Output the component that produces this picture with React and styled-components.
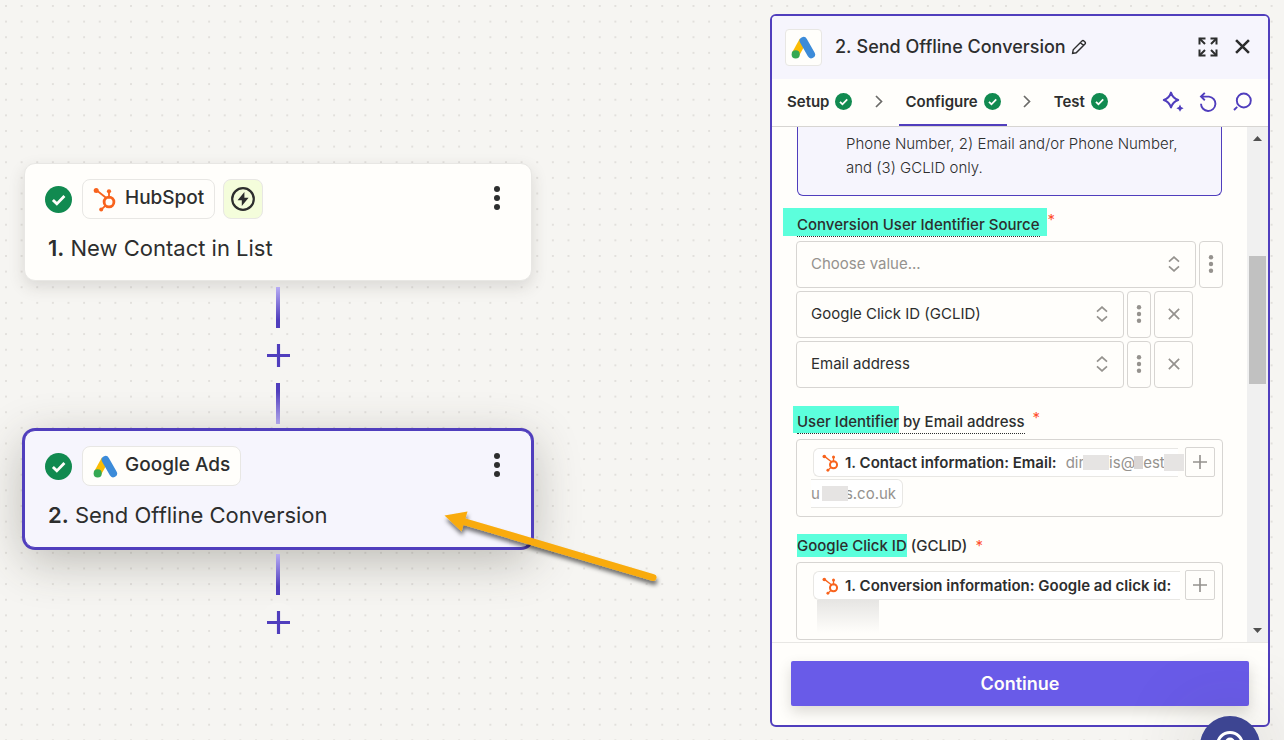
import React from 'react';
import styled, { createGlobalStyle, css } from 'styled-components';

const GlobalStyle = createGlobalStyle`
  * {
    box-sizing: border-box;
  }

  body {
    margin: 0;
    background-color: #f6f5f2;
    color: #2d2e2e;
    font-family: Inter, "Liberation Sans", sans-serif;
    overflow: hidden;
  }

  button,
  select {
    font-family: inherit;
    color: inherit;
    background: none;
    border: none;
    padding: 0;
    margin: 0;
  }

  button {
    cursor: pointer;
  }

  svg {
    display: block;
    flex-shrink: 0;
  }
`;

const Page = styled.div`
  position: relative;
  display: flex;
  align-items: stretch;
  height: 100vh;
  overflow: hidden;
`;

const DotGrid = styled.svg`
  position: absolute;
  inset: 0;
  width: 100%;
  height: 100%;
`;

/* ---------- canvas ---------- */

const Canvas = styled.main`
  position: relative;
  flex: 1;
  min-width: 0;
  display: flex;
  flex-direction: column;
  align-items: flex-start;
  padding: 163px 24px 0;
`;

const Flow = styled.div`
  width: 100%;
  max-width: 508px;
  display: flex;
  flex-direction: column;
  align-items: center;
`;

const StepCard = styled.section`
  width: 100%;
  height: 118px;
  padding: 15px 20px 0;
  border: 1px solid #e8e7e4;
  border-radius: 11px;
  background-color: #fffefb;
  box-shadow: 0 6px 16px rgba(60, 55, 45, 0.15);

  ${({ $selected }) =>
    $selected &&
    css`
      border-color: #503ebd;
      background-color: #f6f5fd;
      box-shadow: 0 0 0 2px #503ebd, 0 12px 48px rgba(60, 55, 45, 0.32);
    `}
`;

const StepHeader = styled.div`
  display: flex;
  align-items: center;
  gap: 8px;
`;

const StepStatus = styled.span`
  display: flex;
  margin-right: 2px;
`;

const AppChip = styled.button`
  display: flex;
  align-items: center;
  gap: 7px;
  height: 40px;
  padding: 0 10px;
  border: 1px solid #e8e7e4;
  border-radius: 8px;
  background-color: #fffefb;
  font-size: 19px;
  font-weight: 500;
  line-height: 24px;
`;

const AppName = styled.span`
  padding-bottom: 2px;
`;

const TriggerChip = styled.span`
  display: flex;
  align-items: center;
  justify-content: center;
  width: 40px;
  height: 40px;
  border: 1px solid #e8e7e4;
  border-radius: 8px;
  background-color: #f4fddb;
`;

const StepMenu = styled.button`
  display: flex;
  justify-content: center;
  width: 24px;
  margin-left: auto;
  margin-right: 2px;
  padding-bottom: 2px;
`;

const StepTitle = styled.h2`
  margin: 14px 0 0 3px;
  font-size: 22px;
  font-weight: 400;
  line-height: 30px;

  b {
    font-weight: 600;
  }
`;

const Connector = styled.div`
  display: flex;
  flex-direction: column;
  align-items: center;
  padding: 6px 0;
`;

const Line = styled.div`
  width: 4px;
  height: 41px;
  background: linear-gradient(
    ${({ $up }) => ($up ? 'to top' : 'to bottom')},
    #b7acf5,
    #503ebd 80%
  );
`;

const AddStep = styled.button`
  display: flex;
  align-items: center;
  justify-content: center;
  width: 39px;
  height: 39px;
  margin: 8px 0;
  border-radius: 50%;
  background-color: #f6f5f2;
  color: #503ebd;
`;

const Arrow = styled.svg`
  position: absolute;
  left: 436px;
  top: 500px;
  pointer-events: none;
  overflow: visible;
`;

/* ---------- side panel ---------- */

const Panel = styled.aside`
  position: relative;
  flex: 0 0 500px;
  display: flex;
  flex-direction: column;
  margin: 14px 14px 13px 0;
  border: 2px solid #503ebd;
  border-radius: 6px;
  background-color: #fffefb;
  overflow: hidden;
`;

const PanelHeader = styled.header`
  display: flex;
  align-items: center;
  flex: 0 0 63px;
  padding: 0 18px 0 13px;
  background-color: #f6f5fd;
`;

const AppTile = styled.div`
  display: flex;
  align-items: center;
  justify-content: center;
  width: 37px;
  height: 37px;
  margin-right: 13px;
  border: 1px solid #e8e7e4;
  border-radius: 4px;
  background-color: #fffefb;
`;

const PanelTitle = styled.h1`
  display: flex;
  gap: 5px;
  margin: 0 5px 0 0;
  padding-bottom: 2px;
  font-size: 18px;
  font-weight: 500;
  line-height: 24px;
`;

const IconButton = styled.button`
  display: flex;
  align-items: center;
  justify-content: center;
  padding-bottom: 2px;
  color: ${({ $accent }) => ($accent ? '#503ebd' : '#2d2e2e')};
`;

const Actions = styled.div`
  display: flex;
  align-items: center;
  gap: ${({ $gap }) => $gap}px;
  margin-left: auto;
`;

const Tabs = styled.nav`
  display: flex;
  align-items: stretch;
  flex: 0 0 48px;
  padding: 0 16px 0 9px;
  border-bottom: 1px solid #d7d5d2;
`;

const Tab = styled.button`
  display: flex;
  align-items: center;
  gap: 6px;
  padding: 0 6px;
  border-bottom: 2px solid ${({ $active }) => ($active ? '#503ebd' : 'transparent')};
  font-size: 15px;
  font-weight: 600;
`;

const TabDivider = styled.span`
  display: flex;
  align-items: center;
  justify-content: center;
  width: 41px;
  padding-bottom: 2px;
  color: #6b6a68;
`;

const Body = styled.div`
  display: flex;
  flex: 1;
  min-height: 0;
`;

const Form = styled.form`
  flex: 1;
  min-width: 0;
  padding: 0 24px;
  overflow: hidden;
`;

const Notice = styled.p`
  margin: 0 1px;
  padding: 5px 36px 15px 48px;
  border: 1px solid #503ebd;
  border-top: none;
  border-radius: 0 0 6px 6px;
  background-color: #f6f5fd;
  font-size: 15px;
  font-weight: 300;
  line-height: 24px;
`;

const Field = styled.div`
  padding-top: ${({ $top }) => $top}px;
`;

const LabelRow = styled.div`
  display: flex;
  align-items: flex-start;
  margin-left: 1px;
  margin-bottom: ${({ $after }) => $after}px;
  font-size: 15px;
  font-weight: 500;
  line-height: 23px;
`;

const Label = styled.label`
  border-bottom: ${({ $hint }) => ($hint ? '1px dotted #2d2e2e' : 'none')};
`;

const Mark = styled.mark`
  display: inline-block;
  margin: 0 -${({ $right = 0 }) => $right}px 0 -${({ $left = 0 }) => $left}px;
  padding: ${({ $top = 0 }) => $top}px ${({ $right = 0 }) => $right}px 0
    ${({ $left = 0 }) => $left}px;
  background-color: #5cffdc;
  color: inherit;
`;

const Required = styled.span`
  margin-left: 8px;
  color: #ff4f2e;
  font-weight: 400;
`;

const SelectList = styled.div`
  display: flex;
  flex-direction: column;
  gap: 3px;
`;

const SelectRow = styled.div`
  display: flex;
  gap: 3px;
  height: 47px;
  padding-right: ${({ $inset }) => ($inset ? 30 : 0)}px;
`;

const SelectBox = styled.div`
  display: flex;
  align-items: center;
  flex: 1;
  padding: 0 15px 2px 0;
  border: 1px solid #d7d5d2;
  border-radius: 4px;
  color: #95928e;
`;

const Select = styled.select`
  flex: 1;
  height: 100%;
  padding-left: 14px;
  appearance: none;
  outline: none;
  font-size: 15px;
  color: ${({ $empty }) => ($empty ? '#95928e' : '#2d2e2e')};
`;

const SquareButton = styled.button`
  display: flex;
  align-items: center;
  justify-content: center;
  width: ${({ $wide }) => ($wide ? 39 : 24)}px;
  padding-bottom: 1px;
  border: 1px solid #d7d5d2;
  border-radius: 4px;
  color: #95928e;
`;

const MappedBox = styled.div`
  display: flex;
  align-items: flex-start;
  height: 78px;
  padding: 7px 7px 0 14px;
  border: 1px solid #d7d5d2;
  border-radius: 4px;
`;

const MappedValue = styled.div`
  flex: 1;
  min-width: 0;
  padding-top: 1px;
  outline: none;
  font-size: 15px;
  white-space: nowrap;
`;

const Pill = styled.div`
  display: flex;
  align-items: center;
  width: fit-content;
  height: 29px;
  border: 1px solid #e8e7e4;
  background-color: #ffffff;
  color: #95928e;

  b {
    margin: 0 9px 0 5px;
    color: #2d2e2e;
    font-weight: 600;
  }
`;

const PillStart = styled(Pill)`
  margin: 0 0 2px 2px;
  padding-left: 8px;
  border-right: none;
  border-radius: 6px 0 0 6px;
`;

const PillEnd = styled(Pill)`
  padding-right: 6px;
  border-left: none;
  border-radius: 0 6px 6px 0;
`;

const Redacted = styled.span`
  z-index: 1;
  width: ${({ $width }) => $width}px;
  height: ${({ $height = 15 }) => $height}px;
  margin: 0 ${({ $over = 0 }) => -$over}px 0 ${({ $before = -1 }) => $before}px;
  background-color: ${({ $dark }) => ($dark ? '#dad6d5' : '#e6e4e3')};
`;

const Smudge = styled.div`
  width: 62px;
  height: 33px;
  margin: -2px 0 0 6px;
  background: linear-gradient(#e6e5e3, #fffefb);
`;

const InsertButton = styled.button`
  display: flex;
  align-items: center;
  justify-content: center;
  width: 30px;
  height: 30px;
  border: 1px solid #d7d5d2;
  border-radius: 2px;
  color: #95928e;
`;

const Scrollbar = styled.div`
  display: flex;
  flex-direction: column;
  align-items: center;
  width: 21px;
  padding: 9px 0;
  background-color: #f0f0f0;
`;

const Thumb = styled.div`
  width: 17px;
  height: 128px;
  margin: 115px 0 auto;
  background-color: #c1c1c1;
`;

const PanelFooter = styled.footer`
  padding: 18px 19px 19px;
  border-top: 1px solid #e8e7e4;
`;

const ContinueButton = styled.button`
  display: block;
  width: 100%;
  height: 45px;
  border-radius: 2px;
  background-color: #695be8;
  box-shadow: 0 6px 14px rgba(60, 55, 45, 0.18);
  color: #fffefb;
  font-size: 18px;
  font-weight: 600;
`;

const HelpBubble = styled.button`
  position: absolute;
  right: 24px;
  bottom: -36px;
  display: flex;
  justify-content: center;
  width: 60px;
  height: 60px;
  padding-top: 14px;
  border-radius: 50%;
  background-color: #3d4592;
  box-shadow: 0 4px 80px rgba(60, 55, 45, 0.25);
`;

/* ---------- icons ---------- */

function CheckBadge({ size }) {
  return (
    <svg width={size} height={size} viewBox="0 0 26 26">
      <circle cx="13" cy="13" r="13" fill="#118a50" />
      <path d="M7.6 13.4l3.8 3.8 7.3-7.6" fill="none" stroke="#fffefb" strokeWidth="2.7" />
    </svg>
  );
}

function HubSpotIcon({ size }) {
  return (
    <svg width={size} height={size} viewBox="0 0 25 25" fill="#f8631d" stroke="#f8631d">
      <path d="M3.5 3.3L13 10.8M16 4.5v7M12.2 18.8L8.500 22.400" fill="none" strokeWidth="1.8" />
      <circle cx="16" cy="15" r="4.9" fill="none" strokeWidth="2.8" />
      <circle cx="3.2" cy="3.4" r="2.5" stroke="none" />
      <circle cx="16" cy="4.3" r="2.1" stroke="none" />
      <circle cx="8.2" cy="22.6" r="2" stroke="none" />
    </svg>
  );
}

function GoogleAdsIcon({ size }) {
  return (
    <svg width={size} height={size} viewBox="0 0 24 24" fill="none" strokeWidth="7.4">
      <path d="M11.6 5.4L4.6 18" stroke="#fbbc04" />
      <path d="M12 5.600l7.400 13" stroke="#3c8bd9" strokeLinecap="round" />
      <circle cx="4.5" cy="18.6" r="3.9" fill="#34a853" />
    </svg>
  );
}

function BoltIcon() {
  return (
    <svg width="24" height="24" viewBox="0 0 24 24">
      <circle cx="12" cy="12" r="10.8" fill="none" stroke="#2d2e2e" strokeWidth="2.2" />
      <path d="M13.4 5L6.6 13.2h4.2V19l6.800-8.200h-4.200z" fill="#2d2e2e" />
    </svg>
  );
}

function Kebab({ height, r }) {
  return (
    <svg width="8" height={height} viewBox={`0 0 8 ${height}`} fill="currentColor">
      <circle cx="4" cy={r} r={r} />
      <circle cx="4" cy={height / 2} r={r} />
      <circle cx="4" cy={height - r} r={r} />
    </svg>
  );
}

function PlusIcon({ size, width }) {
  return (
    <svg width={size} height={size} viewBox="0 0 22 22" stroke="currentColor" strokeWidth={width}>
      <path d="M11 0v22M0 11h22" />
    </svg>
  );
}

function PencilIcon() {
  return (
    <svg width="16" height="16" viewBox="0 0 16 16" fill="none" stroke="#2d2e2e" strokeWidth="1.4">
      <path d="M1.6 14.4l.6-3.6L11 2c.6-.6 1.300-.6 1.900 0L14 3.100c.6.6.6 1.300 0 1.900l-8.800 8.800zM9.400 3.600l3 3" />
    </svg>
  );
}

function ExpandIcon() {
  return (
    <svg width="20" height="20" viewBox="0 0 20 20" fill="none" stroke="currentColor" strokeWidth="2">
      <path d="M1.500 7.500v-6h6M12.500 1.500h6v6M18.500 12.500v6h-6M7.500 18.500h-6v-6" />
      <path d="M1.500 1.500L7 7M18.500 1.500L13 7M18.500 18.500L13 13M1.500 18.500L7 13" />
    </svg>
  );
}

function CloseIcon({ size, width }) {
  return (
    <svg width={size} height={size} viewBox="0 0 14 14" stroke="currentColor" strokeWidth={width}>
      <path d="M1 1l12 12M13 1L1 13" />
    </svg>
  );
}

function ChevronRight() {
  return (
    <svg width="8" height="13" viewBox="0 0 8 13" fill="none" stroke="currentColor" strokeWidth="1.7">
      <path d="M1 1l5.5 5.5L1 12" />
    </svg>
  );
}

function SparkleIcon() {
  return (
    <svg width="22" height="21" viewBox="0 0 22 21">
      <path
        d="M9 1.6Q10.800 7.200 16.200 9 10.800 10.800 9 16.400 7.200 10.800 1.800 9 7.200 7.200 9 1.600z"
        fill="none"
        stroke="currentColor"
        strokeWidth="2"
        strokeLinejoin="round"
      />
      <path d="M18 13.600l1.200 2.400 2.400 1.200-2.400 1.200L18 20.800l-1.200-2.400-2.400-1.200 2.400-1.200z" fill="currentColor" />
    </svg>
  );
}

function UndoIcon() {
  return (
    <svg width="19" height="20" viewBox="0 0 19 20" fill="none" stroke="currentColor" strokeWidth="1.9">
      <path d="M2 4.600h8a7.200 7.200 0 1 1-8 7.200M5.800.8L2 4.600l3.800 3.600" />
    </svg>
  );
}

function SearchIcon() {
  return (
    <svg width="19" height="19" viewBox="0 0 19 19" fill="none" stroke="currentColor" strokeWidth="1.9">
      <circle cx="10.800" cy="8.500" r="7" />
      <path d="M4.200 14.800L1 18" />
    </svg>
  );
}

function SortIcon() {
  return (
    <svg width="12" height="16" viewBox="0 0 12 16" fill="none" stroke="currentColor" strokeWidth="1.700">
      <path d="M1 5.600l5-4.500 5 4.500M1 10.400l5 4.500 5-4.500" />
    </svg>
  );
}

function ScrollArrow({ down }) {
  return (
    <svg width="9" height="5" viewBox="0 0 9 5" fill="#505050">
      <path d={down ? 'M0 0h9L4.500 5z' : 'M0 5h9L4.500 0z'} />
    </svg>
  );
}

function HelpIcon() {
  return (
    <svg width="30" height="30" viewBox="0 0 30 30" fill="none" stroke="#ffffff">
      <circle cx="15" cy="15" r="12.500" strokeWidth="3" />
      <circle cx="15" cy="12.500" r="5" fill="#ffffff" stroke="none" />
    </svg>
  );
}

/* ---------- pieces ---------- */

function Step({ number, title, app, icon, trigger, selected }) {
  return (
    <StepCard $selected={selected}>
      <StepHeader>
        <StepStatus>
          <CheckBadge size={27} />
        </StepStatus>
        <AppChip type="button">
          {icon}
          <AppName>{app}</AppName>
        </AppChip>
        {trigger && (
          <TriggerChip>
            <BoltIcon />
          </TriggerChip>
        )}
        <StepMenu type="button" aria-label="Step options">
          <Kebab height={24} r={3} />
        </StepMenu>
      </StepHeader>
      <StepTitle>
        <b>{number}.</b> {title}
      </StepTitle>
    </StepCard>
  );
}

function AddButton() {
  return (
    <AddStep type="button" aria-label="Add step">
      <PlusIcon size={23} width={3} />
    </AddStep>
  );
}

function ValueSelect({ id, label, value, removable }) {
  return (
    <SelectRow $inset={removable}>
      <SelectBox>
        <Select id={id} aria-label={label} defaultValue={value} $empty={!removable}>
          <option value={value}>{value}</option>
        </Select>
        <SortIcon />
      </SelectBox>
      <SquareButton type="button" aria-label="Value options">
        <Kebab height={18} r={2.2} />
      </SquareButton>
      {removable && (
        <SquareButton type="button" aria-label="Remove value" $wide>
          <CloseIcon size={12} width={2} />
        </SquareButton>
      )}
    </SelectRow>
  );
}

function MappedField({ labelId, children }) {
  return (
    <MappedBox>
      <MappedValue
        role="textbox"
        aria-labelledby={labelId}
        contentEditable
        suppressContentEditableWarning
        spellCheck={false}
      >
        {children}
      </MappedValue>
      <InsertButton type="button" aria-label="Insert data">
        <PlusIcon size={14} width={2.6} />
      </InsertButton>
    </MappedBox>
  );
}

function App() {
  return (
    <Page>
      <GlobalStyle />
      <DotGrid aria-hidden="true">
        <pattern id="dots" x="5" y="5" width="15.625" height="15.625" patternUnits="userSpaceOnUse">
          <circle cx="1" cy="1" r="1" fill="#dcdad6" />
        </pattern>
        <rect width="100%" height="100%" fill="url(#dots)" />
      </DotGrid>

      <Canvas>
        <Flow>
          <Step
            number={1}
            title="New Contact in List"
            app="HubSpot"
            icon={<HubSpotIcon size={25} />}
            trigger
          />
          <Connector>
            <Line />
            <AddButton />
            <Line $up />
          </Connector>
          <Step
            number={2}
            title="Send Offline Conversion"
            app="Google Ads"
            icon={<GoogleAdsIcon size={25} />}
            selected
          />
          <Connector>
            <Line />
            <AddButton />
          </Connector>
        </Flow>
        <Arrow width="230" height="90" viewBox="0 0 230 90" aria-hidden="true">
          <defs>
            <filter id="arrow-shadow" x="-10%" y="-20%" width="120%" height="150%">
              <feDropShadow dx="1" dy="4" stdDeviation="2" floodColor="#000" floodOpacity="0.55" />
            </filter>
          </defs>
          <g filter="url(#arrow-shadow)">
            <path d="M26 21L217 77.500" stroke="#f9ab0b" strokeWidth="7" strokeLinecap="round" />
            <path d="M8.500 15.500L31.500 11.500 25.500 31.500z" fill="#f9ab0b" />
          </g>
        </Arrow>
      </Canvas>

      <Panel>
        <PanelHeader>
          <AppTile>
            <GoogleAdsIcon size={25} />
          </AppTile>
          <PanelTitle>
            <span>2.</span>
            <span>Send Offline Conversion</span>
          </PanelTitle>
          <IconButton type="button" aria-label="Rename step">
            <PencilIcon />
          </IconButton>
          <Actions $gap={17}>
            <IconButton type="button" aria-label="Expand">
              <ExpandIcon />
            </IconButton>
            <IconButton type="button" aria-label="Close">
              <CloseIcon size={15} width={2.4} />
            </IconButton>
          </Actions>
        </PanelHeader>

        <Tabs>
          <Tab type="button">
            Setup <CheckBadge size={17} />
          </Tab>
          <TabDivider>
            <ChevronRight />
          </TabDivider>
          <Tab type="button" $active>
            Configure <CheckBadge size={17} />
          </Tab>
          <TabDivider>
            <ChevronRight />
          </TabDivider>
          <Tab type="button">
            Test <CheckBadge size={17} />
          </Tab>
          <Actions $gap={15}>
            <IconButton type="button" aria-label="Copilot" $accent>
              <SparkleIcon />
            </IconButton>
            <IconButton type="button" aria-label="Reset" $accent>
              <UndoIcon />
            </IconButton>
            <IconButton type="button" aria-label="Search" $accent>
              <SearchIcon />
            </IconButton>
          </Actions>
        </Tabs>

        <Body>
          <Form>
            <Notice>Phone Number, 2) Email and/or Phone Number, and (3) GCLID only.</Notice>

            <Field $top={12}>
              <LabelRow $after={4}>
                <Label htmlFor="source" $hint>
                  <Mark $left={14} $right={7} $top={5}>
                    Conversion User Identifier Source
                  </Mark>
                </Label>
                <Required>*</Required>
              </LabelRow>
              <SelectList>
                <ValueSelect id="source" label="Source" value="Choose value..." />
                <ValueSelect label="Source 1" value="Google Click ID (GCLID)" removable />
                <ValueSelect label="Source 2" value="Email address" removable />
              </SelectList>
            </Field>

            <Field $top={18}>
              <LabelRow $after={5}>
                <Label id="email-label" $hint>
                  <Mark $left={4} $top={4}>
                    User Identifier
                  </Mark>{' '}
                  by Email address
                </Label>
                <Required>*</Required>
              </LabelRow>
              <MappedField labelId="email-label">
                <PillStart>
                  <HubSpotIcon size={18} />
                  <b>1. Contact information: Email:</b>
                  dir
                  <Redacted $width={26} />
                  is@
                  <Redacted $width={9} $height={13} $dark />
                  est
                  <Redacted $width={20} $height={17} $over={6} />
                </PillStart>
                <PillEnd>
                  u
                  <Redacted $width={26} $before={2} $over={3} />
                  s.co.uk
                </PillEnd>
              </MappedField>
            </Field>

            <Field $top={17}>
              <LabelRow $after={5}>
                <Label id="gclid-label">
                  <Mark>Google Click ID</Mark> (GCLID)
                </Label>
                <Required>*</Required>
              </LabelRow>
              <MappedField labelId="gclid-label">
                <PillStart>
                  <HubSpotIcon size={18} />
                  <b>1. Conversion information: Google ad click id:</b>
                </PillStart>
                <Smudge />
              </MappedField>
            </Field>
          </Form>
          <Scrollbar aria-hidden="true">
            <ScrollArrow />
            <Thumb />
            <ScrollArrow down />
          </Scrollbar>
        </Body>

        <PanelFooter>
          <ContinueButton type="button">Continue</ContinueButton>
        </PanelFooter>
      </Panel>

      <HelpBubble type="button" aria-label="Help">
        <HelpIcon />
      </HelpBubble>
    </Page>
  );
}

export default App;
